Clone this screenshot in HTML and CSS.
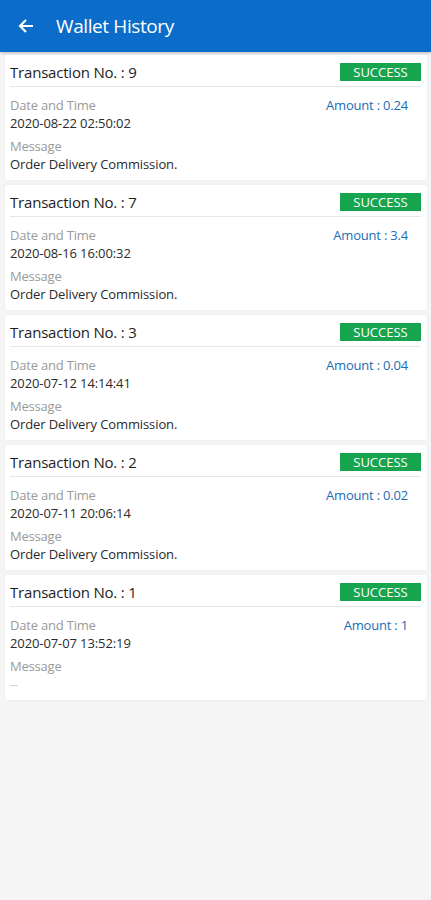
FILE: index.html
```html
<!DOCTYPE html>
<html lang="en">
<head>
	<meta charset="UTF-8">
	<meta name="viewport" content="width=device-width, initial-scale=1.0">
	<title>Wallet History</title>
	<link rel="stylesheet" href="styles.css">
</head>
<body>
	<div class="app-bar">
		<svg class="back-icon" width="16" height="16" viewBox="0 0 16 16">
			<path d="M15 8H2.5M8 2L2 8l6 6" fill="none" stroke="#fff" stroke-width="2.2"/>
		</svg>
		<span class="app-title">Wallet History</span>
	</div>

	<div class="history-list">
		<div class="history-card">
			<div class="card-head">
				<span class="txn-no">Transaction No. : 9</span>
				<span class="status">SUCCESS</span>
			</div>
			<div class="card-body">
				<div class="info">
					<div class="label">Date and Time</div>
					<div class="value">2020-08-22 02:50:02</div>
					<div class="label msg-label">Message</div>
					<div class="value">Order Delivery Commission.</div>
				</div>
				<div class="amount">Amount : 0.24</div>
			</div>
		</div>

		<div class="history-card">
			<div class="card-head">
				<span class="txn-no">Transaction No. : 7</span>
				<span class="status">SUCCESS</span>
			</div>
			<div class="card-body">
				<div class="info">
					<div class="label">Date and Time</div>
					<div class="value">2020-08-16 16:00:32</div>
					<div class="label msg-label">Message</div>
					<div class="value">Order Delivery Commission.</div>
				</div>
				<div class="amount">Amount : 3.4</div>
			</div>
		</div>

		<div class="history-card">
			<div class="card-head">
				<span class="txn-no">Transaction No. : 3</span>
				<span class="status">SUCCESS</span>
			</div>
			<div class="card-body">
				<div class="info">
					<div class="label">Date and Time</div>
					<div class="value">2020-07-12 14:14:41</div>
					<div class="label msg-label">Message</div>
					<div class="value">Order Delivery Commission.</div>
				</div>
				<div class="amount">Amount : 0.04</div>
			</div>
		</div>

		<div class="history-card">
			<div class="card-head">
				<span class="txn-no">Transaction No. : 2</span>
				<span class="status">SUCCESS</span>
			</div>
			<div class="card-body">
				<div class="info">
					<div class="label">Date and Time</div>
					<div class="value">2020-07-11 20:06:14</div>
					<div class="label msg-label">Message</div>
					<div class="value">Order Delivery Commission.</div>
				</div>
				<div class="amount">Amount : 0.02</div>
			</div>
		</div>

		<div class="history-card">
			<div class="card-head">
				<span class="txn-no">Transaction No. : 1</span>
				<span class="status">SUCCESS</span>
			</div>
			<div class="card-body">
				<div class="info">
					<div class="label">Date and Time</div>
					<div class="value">2020-07-07 13:52:19</div>
					<div class="label msg-label">Message</div>
					<div class="value empty">---</div>
				</div>
				<div class="amount">Amount : 1</div>
			</div>
		</div>
	</div>
</body>
</html>
```

FILE: styles.css
```css
body {
	margin: 0;
	background-color: #f5f5f5;
	font-family: "Open Sans", "Noto Sans", sans-serif;
	color: #222;
}

.app-bar {
	height: 52px;
	background-color: #0b6cc9;
	display: flex;
	align-items: center;
	padding-left: 18px;
	box-shadow: 0 1px 3px rgba(0, 0, 0, 0.25);
}

.back-icon {
	margin-right: 22px;
}

.app-title {
	color: #fff;
	font-size: 19px;
	letter-spacing: -0.4px;
}

.history-list {
	padding-top: 3px;
}

.history-card {
	background-color: #fff;
	margin: 0 4px 5px 5px;
	padding: 6px 6px 7px 5px;
	border-radius: 2px;
	box-shadow: 0 0 2px rgba(0, 0, 0, 0.08);
}

.card-head {
	display: flex;
	justify-content: space-between;
	align-items: center;
	height: 22px;
	padding-bottom: 3px;
	border-bottom: 1px solid #e6e6e6;
}

.txn-no {
	font-size: 15px;
	color: #1e1e1e;
	letter-spacing: -0.2px;
}

.status {
	background-color: #17a44f;
	color: #fff;
	font-size: 13px;
	width: 81px;
	height: 18px;
	line-height: 18px;
	text-align: center;
}

.card-body {
	display: flex;
	justify-content: space-between;
	margin-top: 9px;
}

.label {
	font-size: 13px;
	line-height: 18px;
	color: #9a9a9a;
	letter-spacing: -0.2px;
}

.msg-label {
	margin-top: 5px;
}

.value {
	font-size: 13px;
	line-height: 18px;
	color: #2a2a2a;
	letter-spacing: -0.1px;
}

.value.empty {
	font-size: 8px;
	color: #999;
}

.amount {
	font-size: 13px;
	line-height: 18px;
	color: #1c6db3;
	margin-right: 13px;
	letter-spacing: -0.2px;
}
```
